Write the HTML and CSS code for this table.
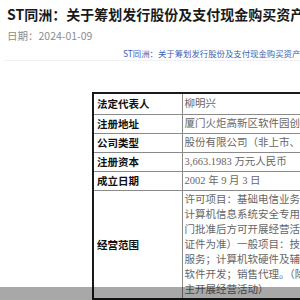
FILE: index.html
```html
<!DOCTYPE html>
<html lang="zh-CN">
<head>
<meta charset="utf-8">
<title>ST同洲公告</title>
<link rel="stylesheet" href="styles.css">
</head>
<body>
<div class="page">
  <header class="head">
    <h1 class="title">ST同洲：关于筹划发行股份及支付现金购买资产并募集配套资金事项的进展公告</h1>
    <div class="date">日期：2024-01-09</div>
    <div class="link">ST同洲：关于筹划发行股份及支付现金购买资产并募集配套资金事项的进展公告</div>
  </header>
  <div class="doc">
    <table class="info">
      <colgroup><col class="c1"><col class="c2"></colgroup>
      <tr class="r-first"><td class="lbl">法定代表人</td><td class="val">柳明兴</td></tr>
      <tr class="r"><td class="lbl">注册地址</td><td class="val">厦门火炬高新区软件园创新大厦</td></tr>
      <tr class="r"><td class="lbl">公司类型</td><td class="val">股份有限公司（非上市、自然人投资或控股）</td></tr>
      <tr class="r"><td class="lbl">注册资本</td><td class="val">3,663.1983 万元人民币</td></tr>
      <tr class="r"><td class="lbl">成立日期</td><td class="val">2002 年 9 月 3 日</td></tr>
      <tr class="r-last"><td class="lbl">经营范围</td><td class="val multi">许可项目：基础电信业务；第二类增值电信业务<br>计算机信息系统安全专用产品销售（依法须经批准<br>门批准后方可开展经营活动，具体经营项目以相关<br>证件为准）一般项目：技术服务、技术开发、技术<br>服务；计算机软硬件及辅助设备零售；信息系统集成<br>软件开发；销售代理。（除依法须经批准的项目外<br>主开展经营活动）</td></tr>
    </table>
  </div>
  <div class="fade"></div>
</div>
</body>
</html>
```
FILE: styles.css
```css
html, body {
  margin: 0;
  padding: 0;
  width: 300px;
  height: 300px;
  overflow: hidden;
  background: #ffffff;
}
.page {
  position: relative;
  width: 300px;
  height: 300px;
  overflow: hidden;
  font-family: "Noto Sans CJK SC", "Noto Sans", sans-serif;
}
.head {
  margin-left: 5px;
  padding: 4px 0 0 2px;
  border-bottom: 1px solid #eef0f4;
}
.title {
  margin: 0;
  font-size: 14px;
  line-height: 20px;
  font-weight: 700;
  color: #1a1a1a;
  white-space: nowrap;
}
.date {
  margin-top: 5px;
  font-size: 10.5px;
  line-height: 14px;
  color: #8c8c8c;
  white-space: nowrap;
}
.link {
  margin-top: 4px;
  padding: 0 0 1px 116px;
  font-size: 8.4px;
  line-height: 12px;
  color: #3a62b0;
  white-space: nowrap;
}
.doc {
  padding: 31px 0 0 92px;
}
.info {
  border-collapse: collapse;
  table-layout: fixed;
  width: 260px;
  border-top: 2px solid #1a1a1a;
  border-left: 2px solid #1a1a1a;
  border-bottom: 2px solid #1a1a1a;
}
.c1 { width: 89px; }
.info td {
  border: 1px solid #8a8a8a;
  padding: 0;
  vertical-align: middle;
  white-space: nowrap;
  overflow: hidden;
}
.lbl {
  padding-left: 3px !important;
  font-size: 10.5px;
  font-weight: 700;
  color: #111;
  line-height: 14px;
}
.val {
  padding-left: 2px !important;
  font-family: "Liberation Serif", "Noto Sans CJK SC", serif;
  font-size: 10.5px;
  color: #666;
  line-height: 14px;
}
.r-first td { height: 20px; }
.r td { height: 18px; }
.r-last td { height: 106px; }
.multi {
  line-height: 15px;
  vertical-align: top !important;
  padding-top: 1px !important;
}
.fade {
  position: absolute;
  left: 0;
  right: 0;
  bottom: 0;
  height: 13px;
  background: rgba(0, 0, 0, 0.34);
}
```
